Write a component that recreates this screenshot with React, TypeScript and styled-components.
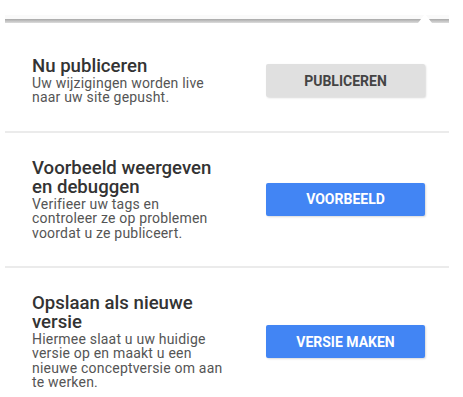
import React from 'react';
import styled, { createGlobalStyle } from 'styled-components';

const GlobalStyle = createGlobalStyle`
  body {
    margin: 0;
    background: #ffffff;
    font-family: Roboto, "Liberation Sans", Arial, sans-serif;
  }
`;

const Frame = styled.div`
  width: 444px;
  padding: 15px 0 0 5px;
`;

const TopStrip = styled.div`
  height: 4px;
  background: #fafafa;
`;

const ShadowLine = styled.div`
  position: relative;
  height: 4px;
  background: linear-gradient(#a8a8a8, #dcdcdc);
`;

const Notch = styled.div`
  position: absolute;
  left: 413px;
  top: -5px;
  width: 0;
  height: 0;
  border-left: 7px solid transparent;
  border-right: 7px solid transparent;
  border-bottom: 9px solid #ffffff;
`;

const Panel = styled.div`
  background: #ffffff;
  padding-top: 8px;
`;

const Section = styled.div<{ $divider?: boolean }>`
  display: flex;
  align-items: center;
  justify-content: space-between;
  padding: 26px 24px 26px 27px;
  border-top: ${(p) => (p.$divider ? '2px solid #ebebeb' : 'none')};
`;

const TextBlock = styled.div`
  width: 191px;
`;

const Title = styled.div`
  font-size: 18.6px;
  font-weight: 500;
  line-height: 19px;
  color: #333333;
`;

const Description = styled.div`
  font-size: 14px;
  line-height: 14.4px;
  letter-spacing: 0.2px;
  color: #555555;
`;

const Button = styled.button<{ $primary?: boolean }>`
  width: 159px;
  height: 33px;
  border: none;
  border-radius: 2px;
  font-family: Roboto, "Liberation Sans", Arial, sans-serif;
  font-size: 14px;
  font-weight: 700;
  cursor: pointer;
  background: ${(p) => (p.$primary ? '#4285f4' : '#e0e0e0')};
  color: ${(p) => (p.$primary ? '#ffffff' : '#444444')};
  box-shadow: 1px 1px 2px rgba(0, 0, 0, 0.15);
`;

const sections = [
  {
    title: 'Nu publiceren',
    description: 'Uw wijzigingen worden live naar uw site gepusht.',
    action: 'PUBLICEREN',
    primary: false,
  },
  {
    title: 'Voorbeeld weergeven en debuggen',
    description: 'Verifieer uw tags en controleer ze op problemen voordat u ze publiceert.',
    action: 'VOORBEELD',
    primary: true,
  },
  {
    title: 'Opslaan als nieuwe versie',
    description: 'Hiermee slaat u uw huidige versie op en maakt u een nieuwe conceptversie om aan te werken.',
    action: 'VERSIE MAKEN',
    primary: true,
  },
];

const App = () => {
  return (
    <>
      <GlobalStyle />
      <Frame>
        <TopStrip />
        <ShadowLine>
          <Notch />
        </ShadowLine>
        <Panel>
          {sections.map((s, i) => (
            <Section key={s.action} $divider={i > 0}>
              <TextBlock>
                <Title>{s.title}</Title>
                <Description>{s.description}</Description>
              </TextBlock>
              <Button $primary={s.primary}>{s.action}</Button>
            </Section>
          ))}
        </Panel>
      </Frame>
    </>
  );
};

export default App;
